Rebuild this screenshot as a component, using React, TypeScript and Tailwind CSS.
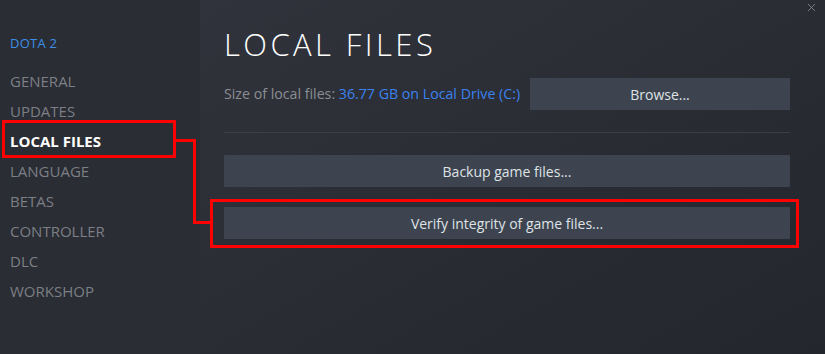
import { X } from "lucide-react"

const navItems = ["GENERAL", "UPDATES", "LOCAL FILES", "LANGUAGE", "BETAS", "CONTROLLER", "DLC", "WORKSHOP"]

function Sidebar() {
  return (
    <aside className="w-[200px] shrink-0 bg-[#2a2d34] pt-[35px] pl-[10px]">
      <div className="text-[13px] leading-4 text-[#3d8fe6] tracking-[0.02em]">DOTA 2</div>
      <nav className="mt-[15px] flex flex-col">
        {navItems.map((item) => (
          <div
            key={item}
            className={
              item === "LOCAL FILES"
                ? "h-[30px] leading-[30px] text-[15px] font-bold text-white"
                : "h-[30px] leading-[30px] text-[15px] text-[#7c7f85]"
            }
          >
            {item}
          </div>
        ))}
      </nav>
    </aside>
  )
}

function Button({ label, className = "" }: { label: string; className?: string }) {
  return (
    <button
      className={`h-8 bg-[#3d4450] text-[14px] text-[#dfe3e6] flex items-center justify-center ${className}`}
    >
      {label}
    </button>
  )
}

function Content() {
  return (
    <section className="relative flex-1 bg-gradient-to-br from-[#30333b] to-[#23262c] pl-6 pr-[35px] pt-[26px]">
      <X className="absolute right-[7px] top-[1px] w-[13px] h-[13px] text-[#8b8e93]" strokeWidth={1.5} />
      <h1 className="text-[31px] leading-9 font-light tracking-[0.11em] text-white">LOCAL FILES</h1>
      <div className="mt-[16px] flex items-center">
        <span className="text-[14.2px] text-[#8b8e93]">
          Size of local files: <span className="text-[#3b82f0]">36.77 GB on Local Drive (C:)</span>
        </span>
        <Button label="Browse..." className="ml-auto w-[260px]" />
      </div>
      <div className="mt-[22px] h-px bg-[#3a3e46]" />
      <Button label="Backup game files..." className="mt-[22px] w-full" />
      <Button label="Verify integrity of game files..." className="mt-5 w-full" />
    </section>
  )
}

export default function App() {
  return (
    <div className="relative flex h-[354px] w-full overflow-hidden font-['Open_Sans',sans-serif]">
      <Sidebar />
      <Content />

      {/* Annotation overlay */}
      <div className="pointer-events-none absolute left-[2px] top-[120px] w-[174px] h-[38px] border-[3px] border-[#ff0000]" />
      <div className="pointer-events-none absolute left-[176px] top-[139px] w-[20px] h-[3px] bg-[#ff0000]" />
      <div className="pointer-events-none absolute left-[193px] top-[139px] w-[3px] h-[85px] bg-[#ff0000]" />
      <div className="pointer-events-none absolute left-[193px] top-[221px] w-[18px] h-[3px] bg-[#ff0000]" />
      <div className="pointer-events-none absolute left-[210px] top-[199px] w-[589px] h-[49px] border-[3px] border-[#ff0000]" />
    </div>
  )
}
